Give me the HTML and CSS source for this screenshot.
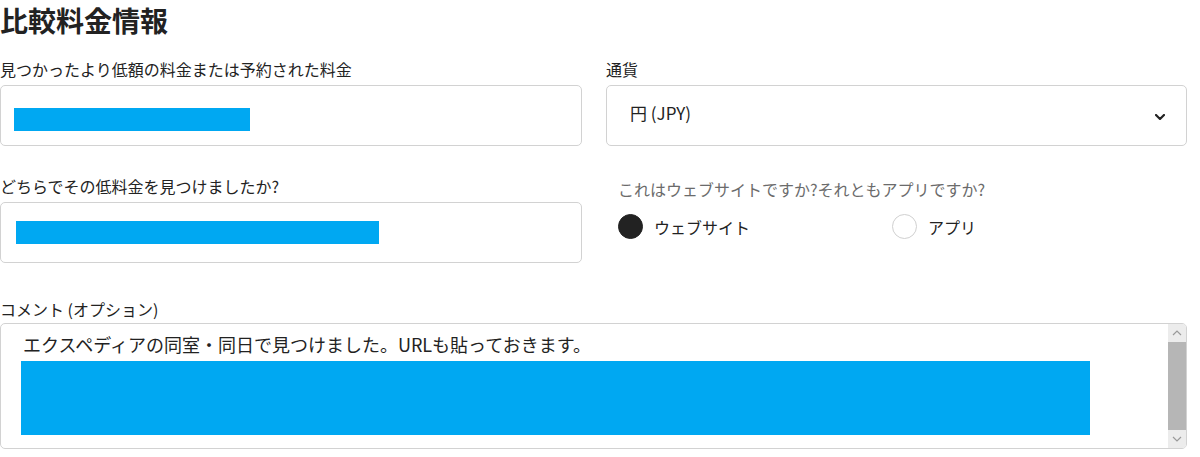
FILE: index.html
```html
<!DOCTYPE html>
<html lang="ja">
<head>
<meta charset="utf-8">
<title>比較料金情報</title>
<link rel="stylesheet" href="styles.css">
</head>
<body>
<div class="page">
  <h1 class="title">比較料金情報</h1>
  <div class="grid">
    <div class="field">
      <div class="label">見つかったより低額の料金または予約された料金</div>
      <div class="box box-price"><span class="redact redact-price"></span></div>
    </div>
    <div class="field">
      <div class="label">通貨</div>
      <div class="box select">
        <span class="select-text">円 (JPY)</span>
        <svg class="chev" width="10" height="6" viewBox="0 0 10 6"><polyline points="1,1 5,5 9,1" fill="none" stroke="#222" stroke-width="2.2" stroke-linecap="round" stroke-linejoin="round"/></svg>
      </div>
    </div>
    <div class="field">
      <div class="label">どちらでその低料金を見つけましたか?</div>
      <div class="box box-where"><span class="redact redact-where"></span></div>
    </div>
    <div class="field field-radio">
      <div class="label label-muted">これはウェブサイトですか?それともアプリですか?</div>
      <div class="radios">
        <div class="option option-first"><span class="radio radio-on"></span><span class="option-text">ウェブサイト</span></div>
        <div class="option"><span class="radio"></span><span class="option-text">アプリ</span></div>
      </div>
    </div>
  </div>
  <div class="comment">
    <div class="label label-comment">コメント (オプション)</div>
    <div class="textarea">
      <div class="textarea-content">
        <div class="textarea-text">エクスペディアの同室・同日で見つけました。URLも貼っておきます。</div>
        <div class="redact redact-comment"></div>
      </div>
      <div class="scrollbar">
        <div class="sb-btn"><svg width="10" height="6" viewBox="0 0 10 6"><polyline points="1,5 5,1 9,5" fill="none" stroke="#9a9a9a" stroke-width="1.2"/></svg></div>
        <div class="sb-thumb"></div>
        <div class="sb-btn"><svg width="10" height="6" viewBox="0 0 10 6"><polyline points="1,1 5,5 9,1" fill="none" stroke="#9a9a9a" stroke-width="1.2"/></svg></div>
      </div>
    </div>
  </div>
</div>
</body>
</html>
```
FILE: styles.css
```css
html, body {
  margin: 0;
  padding: 0;
  background: #ffffff;
}
body {
  font-family: "Noto Sans CJK JP", "Noto Sans", sans-serif;
  color: #222222;
}
.page {
  width: 1187px;
}
.title {
  margin: 0;
  font-size: 28px;
  line-height: 41px;
  font-weight: 700;
  color: #222222;
}
.grid {
  display: grid;
  grid-template-columns: 582px 581px;
  column-gap: 24px;
  row-gap: 29px;
  margin-top: 17px;
}
.label {
  font-size: 16px;
  line-height: 22px;
  margin-bottom: 5px;
  white-space: nowrap;
}
.label-muted {
  color: #6b6b6b;
  padding-left: 12px;
  padding-top: 3px;
  margin-bottom: 0;
}
.box {
  box-sizing: border-box;
  height: 61px;
  border: 1px solid #d2d2d2;
  border-radius: 5px;
  background: #fff;
}
.redact {
  display: block;
  background: #00a8f2;
}
.box-price {
  padding: 22px 0 0 13px;
}
.redact-price {
  width: 236px;
  height: 23px;
}
.box-where {
  padding: 18px 0 0 15px;
}
.redact-where {
  width: 363px;
  height: 23px;
}
.select {
  display: flex;
  align-items: center;
  justify-content: space-between;
  padding: 0 21px 0 23px;
}
.select-text {
  font-size: 17px;
  line-height: 22px;
  margin-top: -5px;
}
.chev {
  display: block;
  margin-top: 2px;
}
.radios {
  display: flex;
  align-items: center;
  padding-left: 12px;
  margin-top: 14px;
}
.option {
  display: flex;
  align-items: center;
}
.option-first {
  width: 274px;
}
.radio {
  box-sizing: border-box;
  width: 25px;
  height: 25px;
  border-radius: 50%;
  border: 1px solid #d0d0d0;
  background: #fff;
}
.radio-on {
  background: #222222;
  border-color: #222222;
}
.option-text {
  font-size: 16px;
  line-height: 22px;
  margin-left: 11px;
}
.comment {
  margin-top: 35px;
}
.label-comment {
  margin-bottom: 3px;
}
.textarea {
  box-sizing: border-box;
  height: 126px;
  border: 1px solid #d2d2d2;
  border-radius: 5px;
  display: flex;
  overflow: hidden;
}
.textarea-content {
  flex: 1;
  padding: 7px 0 0 20px;
}
.textarea-text {
  font-size: 18px;
  line-height: 26px;
  padding-left: 2px;
  white-space: nowrap;
}
.redact-comment {
  width: 1069px;
  height: 74px;
  margin-top: 4px;
}
.scrollbar {
  width: 18px;
  display: flex;
  flex-direction: column;
  background: #efefef;
}
.sb-btn {
  height: 18px;
  display: flex;
  align-items: center;
  justify-content: center;
  background: #ececec;
}
.sb-btn svg {
  display: block;
}
.sb-thumb {
  flex: 1;
  background: #b6b6b6;
}
```
